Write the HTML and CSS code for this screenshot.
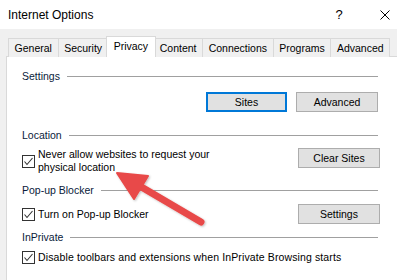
FILE: index.html
```html
<!DOCTYPE html>
<html lang="en">
<head>
    <meta charset="UTF-8">
    <title>Internet Options</title>
    <link rel="stylesheet" href="styles.css">
</head>
<body>
    <div class="titlebar">
        <span class="title">Internet Options</span>
        <div class="caption">
            <span class="caption-btn">?</span>
            <span class="caption-btn">
                <svg width="10" height="10" viewBox="0 0 10 10"><path d="M0.5 0.5 L9.5 9.5 M9.5 0.5 L0.5 9.5" stroke="#000" stroke-width="1"/></svg>
            </span>
        </div>
    </div>

    <div class="window-body">
        <div class="tabs">
            <div class="tab">General</div>
            <div class="tab">Security</div>
            <div class="tab active">Privacy</div>
            <div class="tab">Content</div>
            <div class="tab">Connections</div>
            <div class="tab">Programs</div>
            <div class="tab">Advanced</div>
        </div>

        <div class="panel">
            <div class="group">
                <div class="group-title">Settings</div>
                <div class="button-row">
                    <button class="btn default">Sites</button>
                    <button class="btn">Advanced</button>
                </div>
            </div>

            <div class="group location">
                <div class="group-title">Location</div>
                <div class="option-row">
                    <label class="option multi">
                        <span class="check"><svg width="11" height="11" viewBox="0 0 11 11"><path d="M1.5 5.5 L4 8.5 L9.5 2" fill="none" stroke="#333" stroke-width="1.1"/></svg></span>
                        <span>Never allow websites to request your<br>physical location</span>
                    </label>
                    <button class="btn wide">Clear Sites</button>
                </div>
            </div>

            <div class="group popup">
                <div class="group-title">Pop-up Blocker</div>
                <div class="option-row centered">
                    <label class="option">
                        <span class="check"><svg width="11" height="11" viewBox="0 0 11 11"><path d="M1.5 5.5 L4 8.5 L9.5 2" fill="none" stroke="#333" stroke-width="1.1"/></svg></span>
                        <span>Turn on Pop-up Blocker</span>
                    </label>
                    <button class="btn wide">Settings</button>
                </div>
            </div>

            <div class="group inprivate">
                <div class="group-title">InPrivate</div>
                <div class="option-row single">
                    <label class="option">
                        <span class="check"><svg width="11" height="11" viewBox="0 0 11 11"><path d="M1.5 5.5 L4 8.5 L9.5 2" fill="none" stroke="#333" stroke-width="1.1"/></svg></span>
                        <span class="long">Disable toolbars and extensions when InPrivate Browsing starts</span>
                    </label>
                </div>
            </div>
        </div>
    </div>

    <!-- red annotation arrow pointing at the location option -->
    <svg class="arrow" width="397" height="280" viewBox="0 0 397 280">
        <defs>
            <filter id="shade" x="-20%" y="-20%" width="140%" height="140%">
                <feDropShadow dx="1" dy="1" stdDeviation="1" flood-color="#000" flood-opacity="0.25"/>
            </filter>
        </defs>
        <g filter="url(#shade)" fill="#e84a48" stroke="#e84a48">
            <line x1="201" y1="222" x2="138" y2="185" stroke-width="7" stroke-linecap="round"/>
            <polygon points="117,173 148,176 134,199" stroke-width="2" stroke-linejoin="round"/>
        </g>
    </svg>
</body>
</html>
```

FILE: styles.css
```css
body {
    margin: 0;
    width: 397px;
    height: 280px;
    overflow: hidden;
    background-color: #f0f0f0;
    font-family: "Liberation Sans", Arial, sans-serif;
    font-size: 10.5px;
    color: #000;
    position: relative;
}
.titlebar {
    height: 29px;
    background-color: #fff;
    display: flex;
    align-items: center;
    padding-left: 8px;
}
.title {
    font-size: 12px;
    color: #000;
}
.caption {
    margin-left: auto;
    margin-right: -11px;
    display: flex;
    align-items: center;
}
.caption-btn {
    width: 46px;
    height: 29px;
    display: flex;
    align-items: center;
    justify-content: center;
    font-size: 13px;
}
.window-body {
    padding: 7px 0 0 6px;
}
.tabs {
    display: flex;
    align-items: flex-end;
    height: 21px;
    padding-left: 2px;
}
.tab {
    height: 18px;
    line-height: 18px;
    padding: 0 5.6px;
    border: 1px solid #d9d9d9;
    border-bottom: none;
    margin-right: -1px;
    background-color: #f0f0f0;
    white-space: nowrap;
}
.tab.active {
    position: relative;
    z-index: 1;
    height: 20px;
    background-color: #fff;
    margin-left: -2px;
    margin-right: -3px;
    padding: 0 7px;
}
.panel {
    background-color: #fff;
    border: 1px solid #d9d9d9;
    border-right: none;
    margin-top: -1px;
    height: 300px;
    padding: 12px 0 0 15px;
}
.group {
    width: 358px;
}
.group-title {
    display: flex;
    align-items: center;
    height: 14px;
    color: #0a1a3a;
}
.group-title::after {
    content: "";
    flex: 1;
    border-top: 1px solid #a0a0a0;
    margin: 0 2px 0 7px;
}
.button-row {
    display: flex;
    justify-content: flex-end;
    gap: 9px;
    margin-top: 9px;
    padding-right: 2px;
}
.btn {
    height: 20px;
    width: 82px;
    box-sizing: border-box;
    border: 1px solid #adadad;
    background-color: #e1e1e1;
    font-family: inherit;
    font-size: 10.5px;
    color: #000;
    padding: 0;
}
.btn.default {
    width: 81px;
    border: 2px solid #0078d7;
}
.location {
    margin-top: 16px;
}
.popup {
    margin-top: 9px;
}
.inprivate {
    margin-top: 6px;
}
.option-row {
    display: flex;
    justify-content: space-between;
    align-items: flex-start;
    margin-top: 6px;
}
.option-row.centered {
    align-items: center;
    margin-top: 7px;
}
.option-row.single {
    margin-top: 7px;
}
.option {
    display: flex;
    align-items: center;
    gap: 3px;
    line-height: 13px;
}
.long {
    letter-spacing: 0.12px;
}
.check {
    width: 13px;
    height: 13px;
    box-sizing: border-box;
    border: 1px solid #333;
    background-color: #fff;
    display: flex;
    align-items: center;
    justify-content: center;
    flex-shrink: 0;
}
.arrow {
    position: absolute;
    left: 0;
    top: 0;
    pointer-events: none;
}
```
